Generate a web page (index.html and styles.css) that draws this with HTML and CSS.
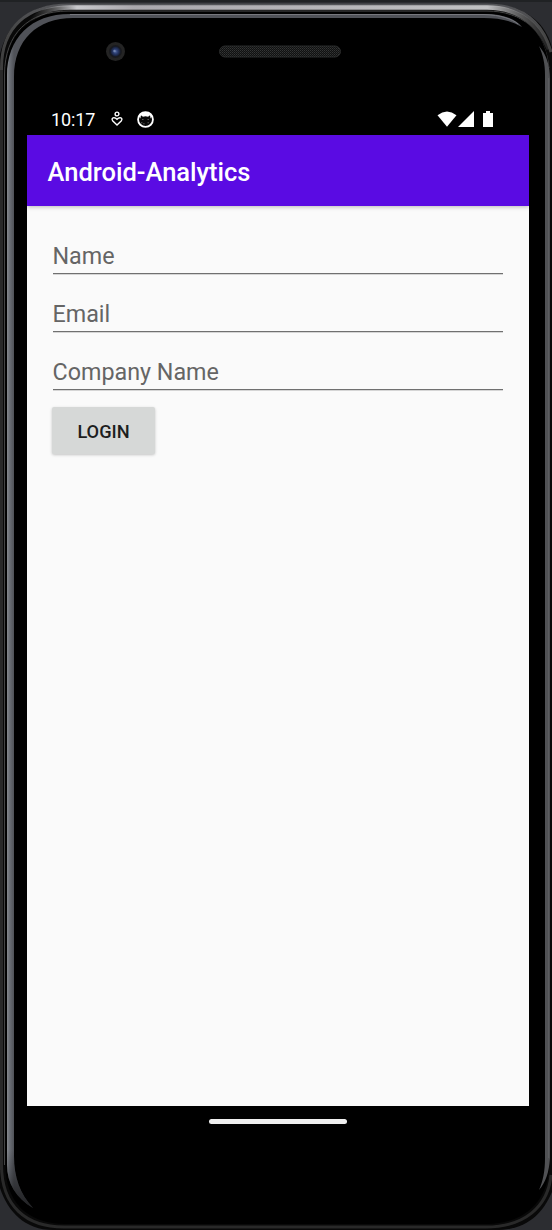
FILE: index.html
```html
<!DOCTYPE html>
<html lang="en">
<head>
<meta charset="utf-8">
<title>Android-Analytics</title>
<link rel="stylesheet" href="styles.css">
</head>
<body>
<div class="device">
  <svg class="frame" viewBox="0 0 552 1230" aria-hidden="true">
    <defs>
      <linearGradient id="rim" x1="0" y1="0" x2="0" y2="1230" gradientUnits="userSpaceOnUse">
        <stop offset="0" stop-color="#55565a"/><stop offset=".03" stop-color="#444"/><stop offset=".12" stop-color="#2b2b2b"/><stop offset="1" stop-color="#2b2b2b"/>
      </linearGradient>
      <linearGradient id="shine" x1="30" y1="0" x2="550" y2="0" gradientUnits="userSpaceOnUse">
        <stop offset="0" stop-color="#777" stop-opacity="0"/><stop offset=".09" stop-color="#c8c8cc"/><stop offset=".2" stop-color="#aaa8ad"/><stop offset=".88" stop-color="#c0c0c2"/><stop offset="1" stop-color="#444" stop-opacity=".4"/>
      </linearGradient>
      <linearGradient id="side" x1="7" y1="0" x2="14" y2="0" gradientUnits="userSpaceOnUse">
        <stop offset="0" stop-color="#85888d"/><stop offset=".35" stop-color="#6c7077"/><stop offset="1" stop-color="#505258"/>
      </linearGradient>
      <linearGradient id="fade" x1="0" y1="1150" x2="0" y2="1208" gradientUnits="userSpaceOnUse">
        <stop offset="0" stop-color="#000" stop-opacity="0"/><stop offset="1" stop-color="#000" stop-opacity=".6"/>
      </linearGradient>
      <pattern id="mesh" width="2" height="2" patternUnits="userSpaceOnUse">
        <rect width="2" height="2" fill="#101111"/><rect width="1" height="1" fill="#353636"/><rect x="1" y="1" width="1" height="1" fill="#272828"/>
      </pattern>
      <radialGradient id="lens"><stop offset="0" stop-color="#5268a0"/><stop offset=".45" stop-color="#2b3d70"/><stop offset="1" stop-color="#141b30"/></radialGradient>
    </defs>
    <rect width="552" height="1230" fill="#2c2d31"/>
    <rect width="552" height="2" fill="#202224"/>
    <path d="M0 54C7 24 29 4 67 4H487C525 4 546 23 552 48V1192C542 1215 526 1230 495 1230H53C25 1230 8 1212 0 1188Z" fill="#090909"/>
    <path d="M1.5 1170V68C1.5 27 27 5 69 5H487C523 5 543 23 551 52" fill="none" stroke="url(#rim)" stroke-width="3"/>
    <path d="M1.5 70V1165C1.5 1206 26 1227 64 1227H486C523 1227 548 1208 551 1175" fill="none" stroke="#292929" stroke-width="3"/>
    <path d="M4.5 1165V74C5 34 28 11 68 11H487C522 11 545 31 549 68" fill="none" stroke="#454545"/>
    <path d="M30 21C41 11 53 7.5 70 7.5H487C515 7.5 536 20 549 49" fill="none" stroke="url(#shine)" stroke-width="4.6"/>
    <path d="M5.5 1165V76C5.5 34 29 12 70 12H487C523 12 549 32 549 75V1165C549 1202 523 1224 487 1224H66C27 1224 5.5 1202 5.5 1165Z" fill="#000"/>
    <path d="M7 1165V76C7 38 31 14 70 14H485C501 14 515 18 522 27C510 20 498 18 484 18H73C37 18 14 40 14 77V1156C14 1177 20 1194 33 1208C16 1198 7 1183 7 1165Z" fill="url(#side)"/>
    <path d="M7 1150H14V1156C14 1177 20 1194 33 1208C16 1198 7 1183 7 1165Z" fill="url(#fade)"/>
    <path d="M70 14.5H484C501 15 512 19 518 24" fill="none" stroke="#77787e"/>
    <path d="M539 46C546 54 550 65 550 79V1158C549 1172 546 1182 539 1190C543 1181 545 1171 545 1158V75C545 64 543 55 539 46Z" fill="#505154"/>
    <path d="M548.5 78V1158" stroke="#5c5d60"/>
    <circle cx="115.5" cy="51.5" r="9.5" fill="#242424"/>
    <circle cx="115.5" cy="51.5" r="6.5" fill="#191a1e"/>
    <circle cx="115.5" cy="51.5" r="5" fill="url(#lens)"/>
    <circle cx="114.5" cy="51" r="1.2" fill="#7184ae"/>
    <rect x="219.5" y="46" width="121" height="11" rx="5.5" fill="url(#mesh)" stroke="#292a2a"/>
  </svg>
  <main class="screen">
    <div class="status">
      <span class="clock">10:17</span>
      <svg class="care" viewBox="0 0 12 16"><g fill="none" stroke="#fff" stroke-width="1.4"><circle cx="6" cy="3" r="1.9"/><path d="M6 14L1.6 9.7C-.2 7.2 3.1 5.2 6 8.3C8.9 5.2 12.2 7.2 10.4 9.7Z"/></g></svg>
      <svg class="cat" viewBox="0 0 16 16"><circle cx="8" cy="8" r="7" fill="#080808" stroke="#fff" stroke-width="1.7"/><path d="M1.7 5Q3 1 8 1T14.3 5L12.8 7L12.3 4.1L10.4 5.3Q8 4.8 5.6 5.3L3.7 4.1L3.2 7Z" fill="#fff"/><path d="M4 11h1M6 12h1M10 11h1M5 8h1M10 8h1" stroke="#777"/></svg>
      <span class="spacer"></span>
      <svg class="wifi" viewBox="0 0 20 16"><path d="M.5 4.2Q10-3.2 19.5 4.2L10 15.8Z" fill="#fff"/></svg>
      <svg class="signal" viewBox="0 0 16 16"><path d="M0 16L16 0V16Z" fill="#fff"/></svg>
      <svg class="battery" viewBox="0 0 10 16"><path d="M0 2H3V0H7V2H10V16H0Z" fill="#fff"/></svg>
    </div>
    <header class="appbar">Android-Analytics</header>
    <form class="content">
      <div class="field">Name</div>
      <div class="field">Email</div>
      <div class="field">Company Name</div>
      <button class="login" type="button">LOGIN</button>
    </form>
    <div class="nav"><span class="pill"></span></div>
  </main>
</div>
</body>
</html>
```
FILE: styles.css
```css
* { box-sizing: border-box; }
body { margin: 0; background: #2c2d31; font-family: Roboto, sans-serif; overflow: hidden; }
.device { position: relative; width: 552px; height: 1230px; padding: 103px 23px 0 27px; }
.frame { position: absolute; inset: 0; width: 552px; height: 1230px; }
.screen { position: relative; width: 502px; height: 1035px; display: flex; flex-direction: column; }
.status { height: 32px; display: flex; align-items: center; padding: 0 36px 0 24px; color: #fff; }
.clock { width: 45px; font-size: 18px; line-height: 32px; padding-top: 2px; white-space: nowrap; letter-spacing: -.1px; }
.care { width: 12px; height: 16px; margin-left: 15px; }
.cat { width: 17px; height: 17px; margin: 1px 0 0 13.5px; }
.spacer { flex: 1; }
.wifi { width: 20px; height: 16px; }
.signal { width: 16px; height: 16px; margin-left: 1px; }
.battery { width: 10px; height: 16px; margin-left: 9px; }
.appbar { height: 71px; flex: none; background: #5a0be3; color: #fff; font-size: 25.5px; font-weight: 500; line-height: 75px; padding-left: 20.5px; box-shadow: 0 1px 4px rgba(0,0,0,.25); z-index: 1; clip-path: inset(0 0 -8px 0); }
.content { flex: 1; background: #fafafa; padding: 20px 26px 0 25px; }
.field { height: 48px; margin: 0 0 10px 1px; text-indent: -.5px; border-bottom: 1px solid #707070; box-shadow: 0 1px 0 #d5d5d5; color: #656565; font-size: 23.3px; line-height: 60px; }
.login { display: block; width: 103px; height: 47px; margin-top: 17px; padding: 1px 0 0; border: 0; border-radius: 2px; background: #d6d8d7; box-shadow: 0 1px 3px rgba(0,0,0,.22); color: #1d1e1e; font: 500 18.2px Roboto, sans-serif; }
.nav { height: 32px; flex: none; display: flex; justify-content: center; align-items: center; padding-bottom: 2px; }
.pill { width: 138px; height: 5px; border-radius: 3px; background: #efefef; }
```
